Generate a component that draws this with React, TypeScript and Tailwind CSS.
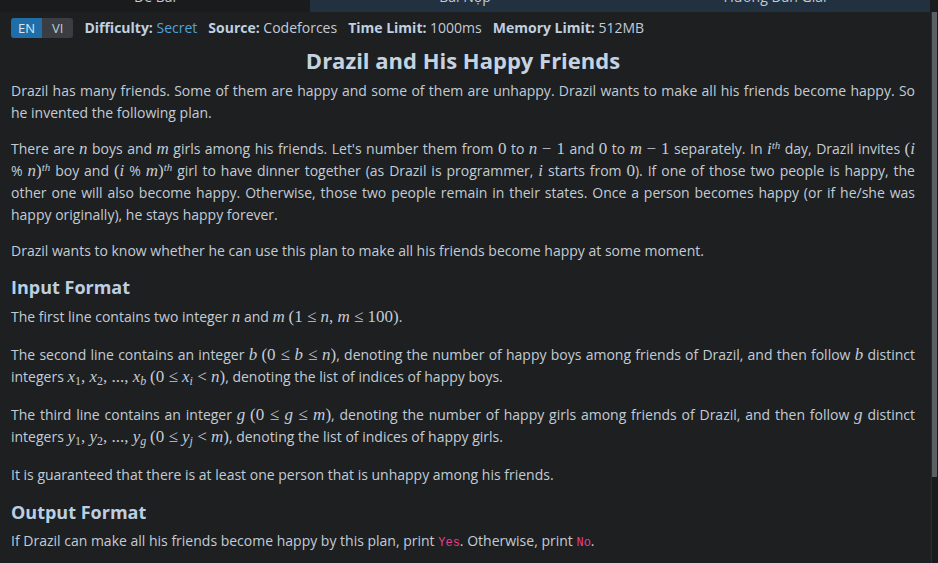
import React from 'react';

const M = ({ children }: { children: React.ReactNode }) => (
  <span className="font-['Liberation_Serif',serif] italic text-[17px]">{children}</span>
);
const R = ({ children }: { children: React.ReactNode }) => (
  <span className="font-['Liberation_Serif',serif] text-[17px]">{children}</span>
);
const Code = ({ children }: { children: React.ReactNode }) => (
  <code className="font-['Liberation_Mono',monospace] text-[12px] text-[#e83e8c]">{children}</code>
);
const Th = () => <sup className="text-[11px] leading-none">th</sup>;

const tabs = ['Đề Bài', 'Bài Nộp', 'Hướng Dẫn Giải'];

export default function App() {
  return (
    <div className="w-[938px] h-[563px] overflow-hidden bg-[#1d1f21] font-['Open_Sans',sans-serif] text-[#c3ccd6] flex flex-col">
      {/* tab strip, scrolled mostly out of view */}
      <div className="h-[12px] flex shrink-0 overflow-hidden">
        {tabs.map((t, i) => (
          <div
            key={t}
            className={
              'w-[310px] h-[12px] overflow-hidden text-center text-[14px] text-[#c3ccd6] ' +
              (i === 0 ? 'bg-[#1a1b1d]' : 'bg-[#223140]')
            }
          >
            <span className="block leading-[20px] -mt-[13px]">{t}</span>
          </div>
        ))}
        <div className="flex-1 bg-[#1a1b1d]" />
      </div>

      <div className="flex flex-1 min-h-0">
        <div className="flex-1 pl-[11px] pr-[16px] pt-[6px] text-[14px] leading-[22px]">
          {/* meta row */}
          <div className="flex items-center gap-[11px] h-[20px]">
            <div className="flex rounded-[3px] overflow-hidden text-[13px] leading-[20px]">
              <span className="bg-[#1f6ea8] text-[#dbe7f2] px-[7px]">EN</span>
              <span className="bg-[#3a3e42] text-[#c3ccd6] px-[10px]">VI</span>
            </div>
            <div className="flex gap-[11px]">
              <span>
                <b className="text-[#bfd0e0]">Difficulty:</b> <span className="text-[#4fa3dc]">Secret</span>
              </span>
              <span>
                <b className="text-[#bfd0e0]">Source:</b> Codeforces
              </span>
              <span>
                <b className="text-[#bfd0e0]">Time Limit:</b> 1000ms
              </span>
              <span>
                <b className="text-[#bfd0e0]">Memory Limit:</b> 512MB
              </span>
            </div>
          </div>

          <h1 className="text-center text-[22px] font-bold leading-[28px] mt-[8px] mb-[6px] text-[#c5d3e0]">
            Drazil and His Happy Friends
          </h1>

          <div className="text-justify">
            <p className="mb-[14px]">
              Drazil has many friends. Some of them are happy and some of them are unhappy. Drazil wants to make all his
              friends become happy. So he invented the following plan.
            </p>
            <p className="mb-[14px]">
              There are <M>n</M> boys and <M>m</M> girls among his friends. Let's number them from <R>0</R> to{' '}
              <M>n</M> <R>− 1</R> and <R>0</R> to <M>m</M> <R>− 1</R> separately. In{' '}
              <M>
                i<Th />
              </M>{' '}
              day, Drazil invites <R>(</R>
              <M>i</M>{' '}
              <span className="whitespace-nowrap">
                % <M>n</M>
                <R>)</R>
                <M>
                  <Th />
                </M>
              </span>{' '}
              boy and <R>(</R>
              <M>i</M> % <M>m</M>
              <R>)</R>
              <M>
                <Th />
              </M>{' '}
              girl to have dinner together (as Drazil is programmer, <M>i</M> starts from <R>0</R>). If one of those two
              people is happy, the other one will also become happy. Otherwise, those two people remain in their states.
              Once a person becomes happy (or if he/she was happy originally), he stays happy forever.
            </p>
            <p className="mb-[13px]">
              Drazil wants to know whether he can use this plan to make all his friends become happy at some moment.
            </p>

            <h2 className="text-[18px] font-bold leading-[24px] mb-[7px] text-[#bccfe2]">Input Format</h2>
            <p className="mb-[16px]">
              The first line contains two integer <M>n</M> and <M>m</M> <R>(1 ≤ </R>
              <M>n</M>
              <R>, </R>
              <M>m</M>
              <R> ≤ 100)</R>.
            </p>
            <p className="mb-[16px]">
              The second line contains an integer <M>b</M> <R>(0 ≤ </R>
              <M>b</M>
              <R> ≤ </R>
              <M>n</M>
              <R>)</R>, denoting the number of happy boys among friends of Drazil, and then follow <M>b</M> distinct
              integers{' '}
              <M>
                x<sub className="not-italic text-[12px] leading-none">1</sub>
              </M>
              <R>, </R>
              <M>
                x<sub className="not-italic text-[12px] leading-none">2</sub>
              </M>
              <R>, ..., </R>
              <M>
                x<sub className="text-[12px] leading-none">b</sub>
              </M>{' '}
              <R>(0 ≤ </R>
              <M>
                x<sub className="text-[12px] leading-none">i</sub>
              </M>
              <R> &lt; </R>
              <M>n</M>
              <R>)</R>, denoting the list of indices of happy boys.
            </p>
            <p className="mb-[16px]">
              The third line contains an integer <M>g</M> <R>(0 ≤ </R>
              <M>g</M>
              <R> ≤ </R>
              <M>m</M>
              <R>)</R>, denoting the number of happy girls among friends of Drazil, and then follow <M>g</M> distinct
              integers{' '}
              <M>
                y<sub className="not-italic text-[12px] leading-none">1</sub>
              </M>
              <R>, </R>
              <M>
                y<sub className="not-italic text-[12px] leading-none">2</sub>
              </M>
              <R>, ..., </R>
              <M>
                y<sub className="text-[12px] leading-none">g</sub>
              </M>{' '}
              <R>(0 ≤ </R>
              <M>
                y<sub className="text-[12px] leading-none">j</sub>
              </M>
              <R> &lt; </R>
              <M>m</M>
              <R>)</R>, denoting the list of indices of happy girls.
            </p>
            <p className="mb-[14px]">It is guaranteed that there is at least one person that is unhappy among his friends.</p>

            <h2 className="text-[18px] font-bold leading-[24px] mb-[6px] text-[#bccfe2]">Output Format</h2>
            <p>
              If Drazil can make all his friends become happy by this plan, print <Code>Yes</Code>. Otherwise, print{' '}
              <Code>No</Code>.
            </p>
          </div>
        </div>

        {/* scrollbar */}
        <div className="w-[7px] flex flex-col bg-[#1a1b1d] border-l border-[#2a2c2e]">
          <div className="h-[465px] w-[5px] bg-[#5c6063]" />
        </div>
      </div>
    </div>
  );
}
